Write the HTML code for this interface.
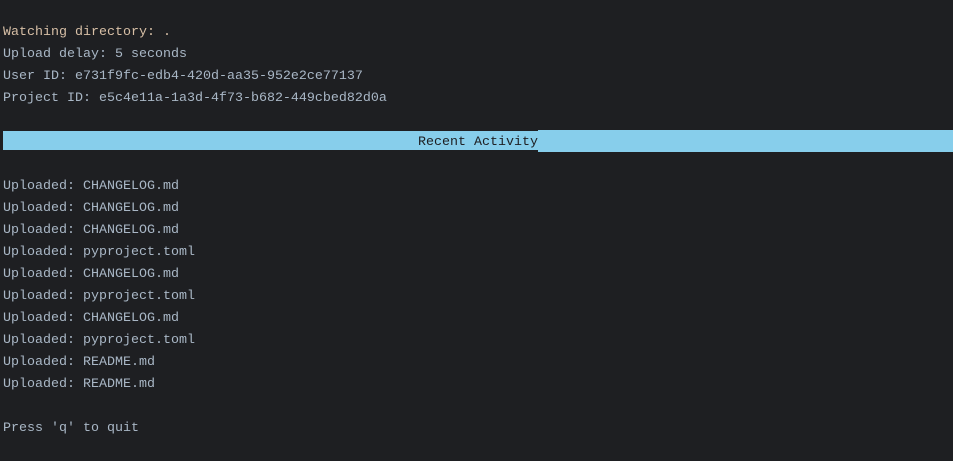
<!DOCTYPE html>
<html><head><meta charset="utf-8"><style>
html,body{margin:0;padding:0;width:953px;height:461px;background:#1e1f22;overflow:hidden}
.l{position:absolute;left:3px;font:13.33px/22px "Liberation Mono",monospace;color:#a9b7c6;white-space:pre}
.bar{position:absolute;left:3px;top:131px;width:535px;height:19px;background:#87ceeb}
.bar2{position:absolute;left:538px;top:130px;width:415px;height:22px;background:#87ceeb}
.bt{position:absolute;left:418px;top:132px;font:13.33px/22px "Liberation Mono",monospace;color:#1e1f22;white-space:pre}
</style></head><body>
<div class="l" style="top:22px;color:#d7bfa6">Watching directory: .</div>
<div class="l" style="top:44px">Upload delay: 5 seconds</div>
<div class="l" style="top:66px">User ID: e731f9fc-edb4-420d-aa35-952e2ce77137</div>
<div class="l" style="top:88px">Project ID: e5c4e11a-1a3d-4f73-b682-449cbed82d0a</div>
<div class="bar"></div><div class="bar2"></div>
<div class="bt">Recent Activity</div>
<div class="l" style="top:176px">Uploaded: CHANGELOG.md</div>
<div class="l" style="top:198px">Uploaded: CHANGELOG.md</div>
<div class="l" style="top:220px">Uploaded: CHANGELOG.md</div>
<div class="l" style="top:242px">Uploaded: pyproject.toml</div>
<div class="l" style="top:264px">Uploaded: CHANGELOG.md</div>
<div class="l" style="top:286px">Uploaded: pyproject.toml</div>
<div class="l" style="top:308px">Uploaded: CHANGELOG.md</div>
<div class="l" style="top:330px">Uploaded: pyproject.toml</div>
<div class="l" style="top:352px">Uploaded: README.md</div>
<div class="l" style="top:374px">Uploaded: README.md</div>
<div class="l" style="top:418px">Press 'q' to quit</div>
</body></html>
